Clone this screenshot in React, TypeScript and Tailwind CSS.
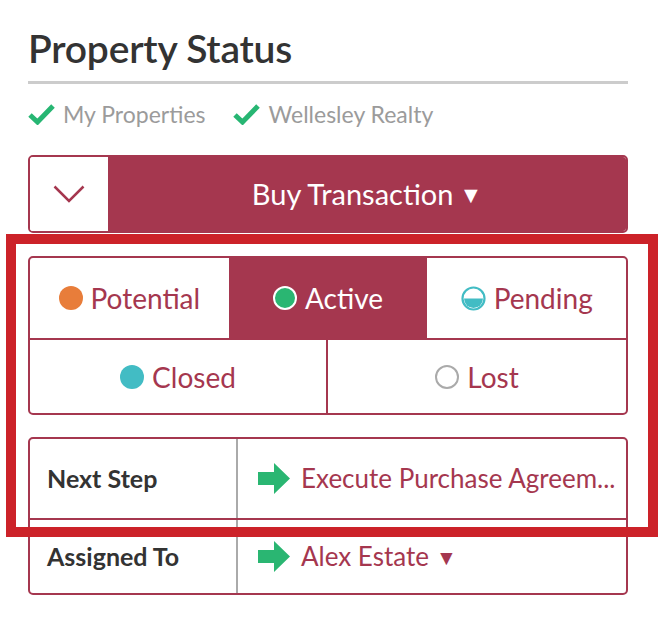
import React from 'react';

const Check = () => (
  <svg width="27" height="22" viewBox="0 0 27 22" className="shrink-0">
    <path d="M2 12 L9.5 19 L25 3" fill="none" stroke="#27b673" strokeWidth="5" strokeLinejoin="miter" />
  </svg>
);

const Arrow = () => (
  <svg width="32" height="31" viewBox="0 0 32 31" className="shrink-0">
    <path d="M0 9 H16 V0 L32 15.5 L16 31 V22 H0 Z" fill="#2ab672" />
  </svg>
);

const Dot = ({ kind }: { kind: 'potential' | 'active' | 'pending' | 'closed' | 'lost' }) => {
  if (kind === 'potential') return <span className="w-[24px] h-[24px] rounded-full bg-[#e87d3a] shrink-0" />;
  if (kind === 'closed') return <span className="w-[24px] h-[24px] rounded-full bg-[#42bcc4] shrink-0" />;
  if (kind === 'active') return <span className="w-[24px] h-[24px] rounded-full bg-[#2ab672] border-2 border-white shrink-0" />;
  if (kind === 'lost') return <span className="w-[24px] h-[24px] rounded-full bg-white border-2 border-[#aaaaaa] shrink-0" />;
  return (
    <svg width="25" height="25" viewBox="0 0 25 25" className="shrink-0">
      <circle cx="12.5" cy="12.5" r="11" fill="white" stroke="#42bcc4" strokeWidth="2.2" />
      <path d="M3 12.5 H22 A9.5 9.5 0 0 1 3 12.5 Z" fill="#42bcc4" />
    </svg>
  );
};

export default function App() {
  const font = { fontFamily: 'Lato, "Noto Sans", sans-serif' };
  return (
    <div className="relative w-[662px] h-[630px] bg-white overflow-hidden" style={font}>
      <div className="w-[628px] pl-[28px] pt-[25px]">
        <h1 className="text-[39px] leading-[46px] font-semibold text-[#333333] tracking-[-0.2px]">Property Status</h1>
        <div className="mt-[10px] h-[3px] bg-[#cccccc]" />

        <div className="mt-[19px] flex items-center h-[22px] text-[23px] text-[#9b9b9b]">
          <Check />
          <span className="ml-[8px]">My Properties</span>
          <span className="ml-[28px]"><Check /></span>
          <span className="ml-[8px]">Wellesley Realty</span>
        </div>

        <div className="mt-[30px] h-[78px] flex rounded-[5px] border-2 border-[#a5374f] overflow-hidden">
          <div className="w-[78px] bg-white flex items-center justify-center">
            <svg width="32" height="18" viewBox="0 0 32 18">
              <path d="M1.5 1.5 L16 16 L30.5 1.5" fill="none" stroke="#a5374f" strokeWidth="2.5" />
            </svg>
          </div>
          <div className="flex-1 bg-[#a5374f] flex items-center justify-center text-white text-[29px]">
            Buy Transaction <span className="ml-[6px] text-[23px]">▼</span>
          </div>
        </div>

        <div className="mt-[23px] rounded-[5px] border-2 border-[#a5374f] overflow-hidden text-[#a5374f] text-[28px]">
          <div className="grid grid-cols-3 h-[80px]">
            <div className="flex items-center justify-center gap-[8px]"><Dot kind="potential" />Potential</div>
            <div className="flex items-center justify-center gap-[8px] bg-[#a5374f] text-white"><Dot kind="active" />Active</div>
            <div className="flex items-center justify-center gap-[8px]"><Dot kind="pending" />Pending</div>
          </div>
          <div className="grid grid-cols-2 h-[75px] border-t-2 border-[#a5374f]">
            <div className="flex items-center justify-center gap-[8px] border-r-2 border-[#a5374f]"><Dot kind="closed" />Closed</div>
            <div className="flex items-center justify-center gap-[8px]"><Dot kind="lost" />Lost</div>
          </div>
        </div>

        <div className="mt-[22px] rounded-[5px] border-2 border-[#a5374f] overflow-hidden">
          <div className="flex h-[79px]">
            <div className="w-[208px] border-r-2 border-[#aaaaaa] flex items-center pl-[17px] text-[25px] font-bold text-[#333333]">Next Step</div>
            <div className="flex-1 flex items-center pl-[20px] gap-[11px] text-[26px] text-[#a5374f] whitespace-nowrap">
              <Arrow />Execute Purchase Agreem...
            </div>
          </div>
          <div className="flex h-[75px] border-t-2 border-[#a5374f]">
            <div className="w-[208px] border-r-2 border-[#aaaaaa] flex items-center pl-[17px] text-[25px] font-bold text-[#333333]">Assigned To</div>
            <div className="flex-1 flex items-center pl-[20px] gap-[11px] text-[26px] text-[#a5374f]">
              <Arrow />Alex Estate <span className="-ml-[4px] text-[21px]">▼</span>
            </div>
          </div>
        </div>
      </div>

      <div className="absolute left-[6px] top-[234px] w-[652px] h-[303px] border-[10px] border-[#cc2229] pointer-events-none" />
    </div>
  );
}
